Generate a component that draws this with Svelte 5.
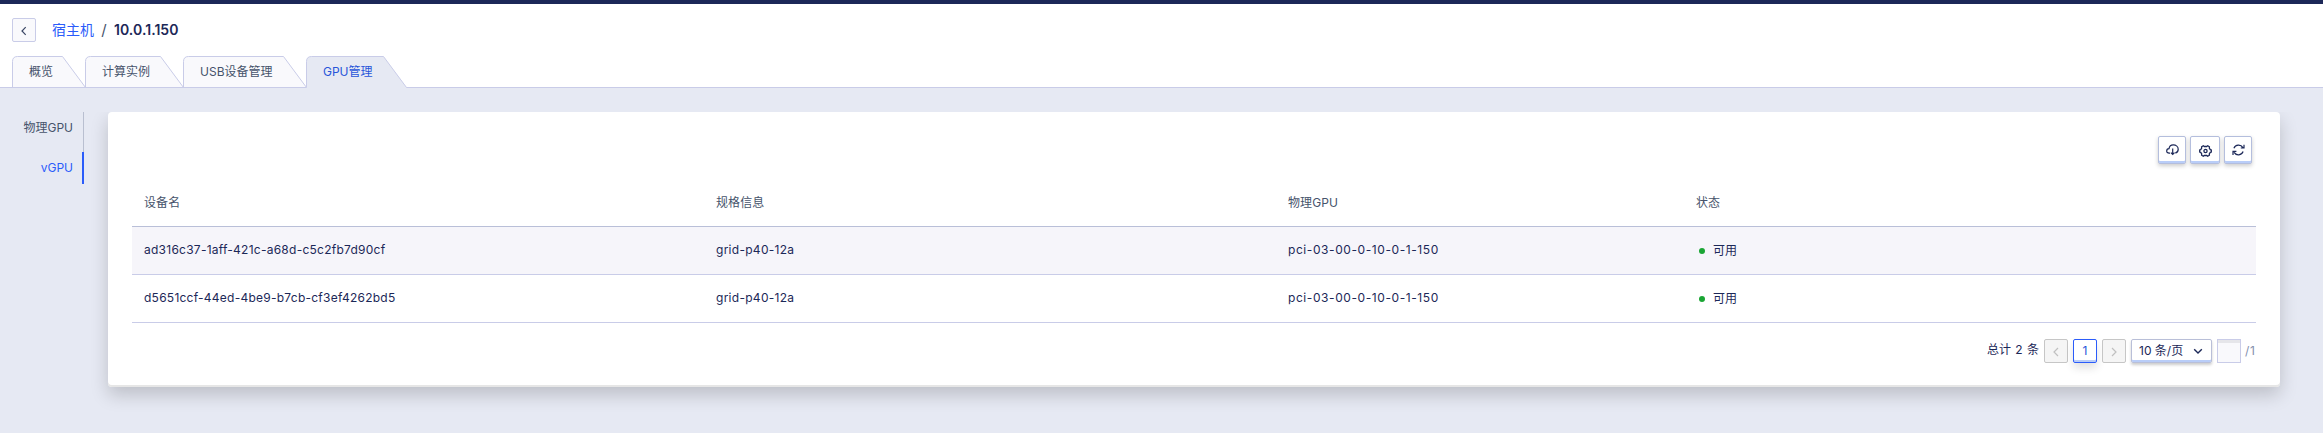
<script>
  const tabs = [
    { label: '概览', width: 73 },
    { label: '计算实例', width: 98 },
    { label: 'USB设备管理', width: 123 },
    { label: 'GPU管理', width: 100, active: true }
  ];
  const columns = ['设备名', '规格信息', '物理GPU', '状态'];
  const rows = [
    { id: 'ad316c37-1aff-421c-a68d-c5c2fb7d90cf', spec: 'grid-p40-12a', gpu: 'pci-03-00-0-10-0-1-150', status: '可用' },
    { id: 'd5651ccf-44ed-4be9-b7cb-cf3ef4262bd5', spec: 'grid-p40-12a', gpu: 'pci-03-00-0-10-0-1-150', status: '可用' }
  ];
</script>

<div class="page">
  <header>
    <button class="back" aria-label="返回">
      <svg width="8" height="10" viewBox="0 0 8 10"><path d="M5.7 1.2 2 5l3.7 3.8" /></svg>
    </button>
    <nav class="crumbs"><a>宿主机</a><span class="slash">/</span><strong>10.0.1.150</strong></nav>
  </header>

  <div class="tabs">
    {#each tabs as tab}
      <div class="tab" class:active={tab.active} style:width="{tab.width}px">
        <svg width={tab.width + 1} height="32">
          <path class="shape" d="M.5 32V5.5Q.5 .5 5.5 .5H{tab.width - 22.5}L{tab.width + 0.5} 31.5V32Z" />
          <path class="edge" d="M.5 31.5V5.5Q.5 .5 5.5 .5H{tab.width - 22.5}L{tab.width + 0.5} 31.5" />
        </svg>
        <span>{tab.label}</span>
      </div>
    {/each}
  </div>

  <main>
    <aside>
      <div class="side">物理GPU</div>
      <div class="side current">vGPU</div>
    </aside>

    <section class="card">
      <div class="tools">
        <button aria-label="下载">
          <svg width="13" height="12" viewBox="0 0 13 12"><path d="M4 9.200H3.200C1.600 9.200.7 8.200.7 6.900c0-1.200.9-2.100 2.300-2.200C3.400 2.300 5 .9 7.200.9c2.800 0 5 1.800 5 4.300 0 2-1.300 3.500-3 3.800M6.700 4.400v6M4.900 8.600l1.800 1.900 1.800-1.900" /></svg>
        </button>
        <button class="wide" aria-label="设置">
          <svg class="gear" width="13" height="12" viewBox="0 0 13 12"><path d="M4.300.8 5.300 1.500H7.700L8.700.8 10.400 1.800 10.300 3.100 11.300 4.600 12.300 5V7L11.300 7.400 10.300 8.900 10.400 10.200 8.700 11.200 7.700 10.500H5.300L4.300 11.200 2.600 10.200 2.700 8.900 1.700 7.400.7 7V5L1.700 4.600 2.700 3.100 2.600 1.800Z" /><circle cx="6.500" cy="6" r="1.600" /></svg>
        </button>
        <button aria-label="刷新">
          <svg width="13" height="12" viewBox="0 0 13 12"><path d="M1.900 4.300A5 5 0 0 1 10.900 3.600M12 .8V4H8.800M11.100 7.500A5 5 0 0 1 2.100 8.400M1 11V7.400H4.400" /></svg>
        </button>
      </div>

      <div class="table">
        <div class="row head">
          {#each columns as name}<div>{name}</div>{/each}
        </div>
        {#each rows as row, i}
          <div class="row" class:striped={i === 0}>
            <div class="id">{row.id}</div>
            <div class="spec">{row.spec}</div>
            <div class="gpu">{row.gpu}</div>
            <div class="status"><i></i>{row.status}</div>
          </div>
        {/each}
      </div>

      <footer>
        <span class="total">总计 2 条</span>
        <button class="step" aria-label="上一页"><svg width="8" height="10" viewBox="0 0 8 10"><path d="M6 1 2 5l4 4" /></svg></button>
        <button class="num">1</button>
        <button class="step" aria-label="下一页"><svg width="8" height="10" viewBox="0 0 8 10"><path d="M2 1l4 4-4 4" /></svg></button>
        <div class="select">10 条/页<svg width="10" height="7" viewBox="0 0 10 7"><path d="M1.200 1.200 5 5l3.800-3.800" /></svg></div>
        <input aria-label="页码" />
        <span class="pages">/1</span>
      </footer>
    </section>
  </main>
</div>

<style>
  .page {
    display: flex;
    flex-direction: column;
    height: 433px;
    overflow: hidden;
    box-sizing: border-box;
    border-top: 4px solid #1c2858;
    background: #fff;
    color: #1c2858;
    font: 12px/18px Inter, 'Noto Sans CJK SC', sans-serif;
  }
  .page :is(button, input, div, aside, section, footer) { box-sizing: border-box; }
  button { padding: 0; font: inherit; color: inherit; display: flex; align-items: center; justify-content: center; }
  svg { display: block; fill: none; stroke: currentColor; stroke-width: 1.2; flex: none; }
  header { display: flex; align-items: center; padding: 14px 12px 0; gap: 16px; height: 24px; }
  .back { width: 24px; height: 24px; border: 1px solid #c9cce8; border-radius: 2px; background: #f9f9fc; color: #3a4664; }
  .back svg { margin-top: 2px; }
  .crumbs { display: flex; font-size: 14px; line-height: 24px; }
  .crumbs a { color: #2b5cfa; }
  .slash { color: #46536b; width: 20px; text-align: center; font-size: 15px; }
  strong { font-weight: 600; letter-spacing: 0.05px; }

  .tabs { display: flex; height: 32px; margin-top: 14px; padding-left: 12px; box-shadow: inset 0 -1px #c9cce8; }
  .tab { position: relative; height: 32px; padding-left: 17px; line-height: 32px; color: #46536b; white-space: nowrap; }
  .tab svg { position: absolute; left: 0; top: 0; stroke-width: 1; }
  .tab span { position: relative; }
  .shape { fill: #f9f9fc; stroke: none; }
  .edge { stroke: #c9cce8; }
  .tab:not(.active) { box-shadow: inset 0 -1px #c9cce8; }
  .tab:not(.active) svg { height: 31px; }
  .active { color: #2855d9; }
  .active .shape { fill: #e6e9f3; }

  main { display: flex; flex: 1; background: #e6e9f3; padding: 24px 43px 46px 0; }
  aside { width: 84px; margin-right: 24px; text-align: right; }
  .side { height: 32px; line-height: 32px; padding-right: 10px; color: #46536b; border-right: 1px solid #b9bfd0; }
  .side:first-child { height: 40px; }
  .side.current { color: #2b5cfa; border-right: 2px solid #2b5cfa; padding-right: 9px; }

  .card {
    flex: 1;
    height: 275px;
    padding: 24px 24px 0;
    border-radius: 4px;
    background: #fff;
    box-shadow: inset 0 -2px #e6e6e6, 0 8px 18px rgba(0, 0, 0, 0.18);
    clip-path: inset(0 -40px -46px -24px);
  }
  .tools { display: flex; gap: 4px; justify-content: flex-end; padding-right: 4px; height: 28px; }
  .tools button {
    width: 28px;
    height: 28px;
    padding-bottom: 1px;
    border: 1px solid #b4bedd;
    border-radius: 2px;
    background: #fff;
    box-shadow: inset 0 -2px #b9cdf8, 0 2px 4px rgba(0, 0, 0, 0.2);
  }
  .tools .wide { width: 30px; }
  .gear { margin-top: 3px; stroke-width: 1.3; }

  .table { margin-top: 15px; }
  .row {
    display: grid;
    grid-template-columns: 572px 572px 408px 1fr;
    height: 48px;
    align-items: center;
    padding: 0 0 1px 12px;
    border-bottom: 1px solid #c9cce8;
    line-height: 20px;
  }
  .head { color: #46536b; border-color: #b9bfd8; padding-bottom: 0; }
  .striped { background: #f6f5fa; }
  .id { letter-spacing: 0.25px; }
  .spec { letter-spacing: 0.28px; }
  .gpu { letter-spacing: 0.58px; }
  .head div { letter-spacing: 0.1px; }
  .status { display: flex; align-items: center; padding: 1px 0 0 3px; }
  .status i { width: 6px; height: 6px; border-radius: 50%; background: #1aa534; margin-right: 8px; }

  footer { display: flex; align-items: center; justify-content: flex-end; margin-top: 16px; height: 24px; }
  footer .total { margin: -2px 5px 0 0; word-spacing: 1px; }
  .step, .num { width: 24px; height: 24px; border-radius: 2px; margin-right: 5px; }
  .step { border: 1px solid #c6c6c6; background: #f5f5f5; color: #c0c0c0; }
  .step svg { margin-top: 2px; }
  .num { border: 1px solid #2b5cfa; background: #fff; color: #2855d9; box-shadow: inset 0 -2px #b9cdf8, 0 5px 8px rgba(0, 0, 0, 0.12); }
  .select {
    display: flex;
    align-items: center;
    justify-content: space-between;
    width: 81px;
    height: 24px;
    padding: 0 8px 1px 7px;
    border: 1px solid #b9bfd8;
    border-radius: 2px;
    box-shadow: inset 0 -2px #b9cdf8, 0 2px 3px rgba(0, 0, 0, 0.2);
    white-space: nowrap;
  }
  .select svg { stroke-width: 1.4; margin-top: 1px; }
  input { width: 24px; height: 24px; padding: 0; margin: 0 4px 0 5px; border: 1px solid #c9cce8; background: #f9f9fc; box-shadow: inset 0 3px #e6e6ea; }
  .pages { width: 11px; color: #8490ad; letter-spacing: 0.6px; }
</style>
